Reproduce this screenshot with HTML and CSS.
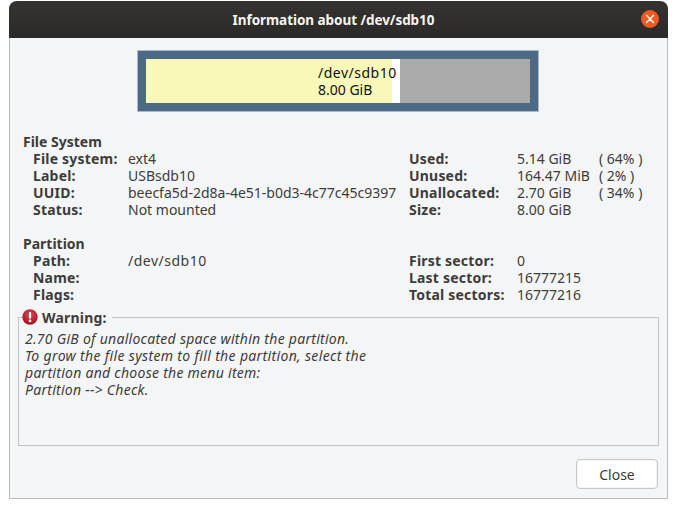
FILE: index.html
```html
<!DOCTYPE html>
<html lang="en">
<head>
<meta charset="utf-8">
<title>Information about /dev/sdb10</title>
<link rel="stylesheet" href="styles.css">
</head>
<body>
<div class="window">
  <header class="titlebar">
    <span class="title">Information about /dev/sdb10</span>
    <span class="close-x"><svg width="18" height="18" viewBox="0 0 18 18"><circle cx="9" cy="9" r="9" fill="#ef5a24"/><path d="M5.6 5.6l6.8 6.8M12.4 5.6l-6.8 6.8" stroke="#fff" stroke-width="1.4" stroke-linecap="round"/></svg></span>
  </header>
  <main class="content">
    <div class="graph">
      <div class="graph-inner">
        <div class="used"><span class="used-text"><span class="path">/dev/sdb10</span><br>8.00 GiB</span></div>
        <div class="unused"></div>
        <div class="unalloc"></div>
      </div>
    </div>
    <div class="details">
      <div class="col-left">
        <div class="head">File System</div>
        <div class="row"><b>File system:</b><span>ext4</span></div>
        <div class="row"><b>Label:</b><span>USBsdb10</span></div>
        <div class="row"><b>UUID:</b><span>beecfa5d-2d8a-4e51-b0d3-4c77c45c9397</span></div>
        <div class="row"><b>Status:</b><span>Not mounted</span></div>
        <div class="spacer"></div>
        <div class="head">Partition</div>
        <div class="row"><b>Path:</b><span class="path">/dev/sdb10</span></div>
        <div class="row"><b>Name:</b><span></span></div>
        <div class="row"><b>Flags:</b><span></span></div>
      </div>
      <div class="col-right">
        <div class="spacer"></div>
        <div class="rrow"><b>Used:</b><span>5.14 GiB</span><span>( 64% )</span></div>
        <div class="rrow"><b>Unused:</b><span>164.47 MiB</span><span>( 2% )</span></div>
        <div class="rrow"><b>Unallocated:</b><span>2.70 GiB</span><span>( 34% )</span></div>
        <div class="rrow"><b>Size:</b><span>8.00 GiB</span><span></span></div>
        <div class="spacer"></div>
        <div class="spacer"></div>
        <div class="rrow"><b>First sector:</b><span>0</span><span></span></div>
        <div class="rrow"><b>Last sector:</b><span>16777215</span><span></span></div>
        <div class="rrow"><b>Total sectors:</b><span>16777216</span><span></span></div>
      </div>
    </div>
    <fieldset class="warning">
      <legend class="warning-legend">
        <svg class="warn-icon" width="16" height="16" viewBox="0 0 16 16"><defs><radialGradient id="rg" cx="50%" cy="35%" r="65%"><stop offset="0" stop-color="#e0474c"/><stop offset="1" stop-color="#a40f24"/></radialGradient></defs><circle cx="8" cy="8" r="7.7" fill="url(#rg)"/><rect x="6.9" y="3" width="2.2" height="6.6" rx="0.8" fill="#fff"/><circle cx="8" cy="11.9" r="1.3" fill="#fff"/></svg>
        <b class="warning-title">Warning:</b>
      </legend>
      <p class="warning-text">2.70 GiB of unallocated space within the partition.<br><span class="grow">To grow the file system to fill the partition, select the</span><br>partition and choose the menu item:<br>Partition --&gt; Check.</p>
    </fieldset>
    <div class="actions"><button class="close-btn" type="button">Close</button></div>
  </main>
</div>
</body>
</html>
```
FILE: styles.css
```css
* { box-sizing: border-box; }
html, body { margin: 0; height: 100%; background: #fff; }
body { padding: 1px 9px 0 9px; font-family: "Noto Sans", sans-serif; font-size: 14px; color: #3d3c3a; overflow: hidden; }
.window { width: 659px; height: 498px; display: flex; flex-direction: column; border: 1px solid #b9bbbd; border-top: 0; border-radius: 8px 8px 0 0; background: #f4f5f7; }
.titlebar { height: 37px; margin: 0 -1px; flex: none; display: flex; align-items: center; justify-content: center; padding-right: 10px; position: relative; background: linear-gradient(#353331, #2c2a29); border-radius: 8px 8px 0 0; color: #f5f5f3; font-weight: 700; font-size: 13.5px; letter-spacing: -0.05px; }
.close-x { position: absolute; right: 9px; top: 9px; height: 18px; }
.content { flex: 1; display: flex; flex-direction: column; padding: 12px 8px 9px 8px; }
.graph { width: 402px; height: 62px; margin: 0 0 0 119px; flex: none; background: #4c6a85; border: 1px solid #a9b9c6; padding: 8px; }
.graph-inner { display: flex; height: 44px; width: 384px; }
.used { width: 246px; background: #f8f8b8; display: flex; justify-content: flex-end; color: #111; line-height: 17px; padding-top: 5px; }
.used-text { width: 78px; margin-right: -4px; white-space: nowrap; position: relative; z-index: 1; }
.path { letter-spacing: 0.5px; }
.unused { width: 8px; background: #fff; }
.unalloc { flex: 1; background: #aaa; }
.details { display: flex; margin-top: 21px; padding-left: 5px; line-height: 17px; flex: none; }
.col-left { width: 386px; }
.col-right { flex: 1; }
.head { font-weight: 700; }
b { letter-spacing: 0.2px; }
.row { display: grid; grid-template-columns: 95px auto; padding-left: 10px; height: 17px; white-space: nowrap; }
.rrow { display: grid; grid-template-columns: 108px 82px auto; height: 17px; white-space: nowrap; }
.spacer { height: 17px; }
.warning { margin: 6px 0 0 0; padding: 0 6px; height: 137px; border: 1px solid #c0c3c6; min-width: 0; flex: none; }
.warning-legend { display: flex; align-items: center; gap: 4px; padding: 0 5px 0 0; margin-left: -3px; height: 17px; line-height: 17px; }
.warn-icon { flex: none; margin-top: -2px; }
.warning-title { margin-top: -1px; }
.warning-text { margin: 4px 0 0 0; font-style: italic; line-height: 17px; letter-spacing: 0.27px; white-space: nowrap; }
.grow { letter-spacing: 0.34px; }
.actions { display: flex; justify-content: flex-end; margin-top: 13px; padding-right: 1px; }
.close-btn { width: 82px; height: 30px; font: inherit; color: #3d3c3a; background: #fff; border: 1px solid #c5c7c9; border-radius: 4px; box-shadow: inset 0 0 0 1px #f4f5f7; }
```
